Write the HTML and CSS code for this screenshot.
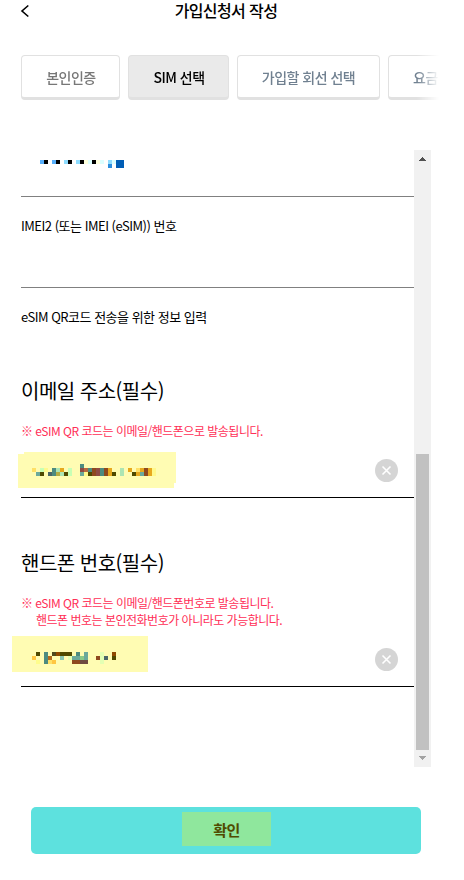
FILE: index.html
```html
<!DOCTYPE html>
<html lang="ko">
<head>
<meta charset="utf-8">
<title>가입신청서 작성</title>
<link rel="stylesheet" href="styles.css">
</head>
<body>
<header class="header">
  <svg class="back" width="10" height="14" viewBox="0 0 10 14"><path d="M8.300 1.500 2 7l6.300 5.500" fill="none" stroke="#000" stroke-width="1.600"/></svg>
  <h1 class="title">가입신청서 작성</h1>
</header>
<nav class="tabs">
  <div class="tab tab-done">본인인증</div>
  <div class="tab tab-active">SIM 선택</div>
  <div class="tab tab-line">가입할 회선 선택</div>
  <div class="tab tab-plan">요금</div>
</nav>
<main class="scroller">
  <div class="content">
    <div class="field field-first">
      <svg class="mosaic" width="88" height="8" viewBox="0 0 22 2" shape-rendering="crispEdges">
        <path fill="#58b0fc" d="M0 0h1v1h-1zM3 0h1v1h-1z"/>
        <path fill="#8edcff" d="M6 0h1v1h-1zM9 0h1v1h-1zM17 0h1v1h-1z"/>
        <path fill="#000" d="M1 0h1v1h-1zM4 0h1v1h-1zM7 0h1v1h-1zM10 0h1v1h-1zM13 0h1v1h-1z"/>
        <path fill="#ffffdc" d="M11 0h1v1h-1zM14 0h1v1h-1z"/>
        <path fill="#dcffff" d="M12 0h1v1h-1zM15 0h1v1h-1zM18 0h1v1h-1z"/>
        <path fill="#2b8edf" d="M17 1h1v1h-1z"/>
        <path fill="#005db5" d="M19 0h2v2h-2z"/>
      </svg>
    </div>
    <div class="field field-imei"><span class="label">IMEI2 (또는 IMEI (eSIM)) 번호</span></div>
    <p class="label info">eSIM QR코드 전송을 위한 정보 입력</p>
    <h2 class="heading">이메일 주소(필수)</h2>
    <p class="notice">※ eSIM QR 코드는 이메일/핸드폰으로 발송됩니다.</p>
    <div class="field field-email">
      <svg class="mark" width="158" height="36" viewBox="0 0 158 36" shape-rendering="crispEdges">
        <path fill="#fffcb3" d="M6 0h152v31h-2v5H0V2h6z"/>
        <g transform="translate(14 12) scale(4)">
          <path fill="#ffe066" d="M0 1h1v1h-1zM26 1h1v1h-1z"/>
          <path fill="#fff98c" d="M30 1h1v2h-1zM13 2h1v1h-1zM3 1h1v1h-1z"/>
          <path fill="#c8ffb5" d="M2 1h1v1h-1zM9 1h1v2h-1z"/>
          <path fill="#ade5b3" d="M6 1h1v1h-1zM7 2h1v1h-1zM22 1h1v2h-1z"/>
          <path fill="#4d8b80" d="M5 1h1v2h-1zM12 0h1v1h-1zM14 1h1v1h-1zM17 1h1v2h-1z"/>
          <path fill="#6ba99b" d="M1 2h1v1h-1zM12 2h1v1h-1zM27 2h1v1h-1z"/>
          <path fill="#4b6768" d="M4 2h1v1h-1z"/>
          <path fill="#b5ad42" d="M6 2h1v1h-1z"/>
          <path fill="#e7a91e" d="M7 1h1v1h-1zM19 1h1v2h-1zM24 1h1v1h-1zM27 1h1v1h-1zM26 2h1v1h-1zM29 1h1v2h-1z"/>
          <path fill="#8f4b43" d="M12 1h1v1h-1zM16 1h1v2h-1z"/>
          <path fill="#b56a42" d="M13 1h1v1h-1z"/>
          <path fill="#8f491e" d="M15 1h1v2h-1zM18 1h1v2h-1zM28 1h1v2h-1z"/>
          <path fill="#4f4900" d="M2 2h1v1h-1zM8 2h1v1h-1zM14 2h1v1h-1zM20 2h1v1h-1zM25 2h1v1h-1z"/>
        </g>
      </svg>
      <svg class="clear" width="24" height="24" viewBox="0 0 24 24"><circle cx="11.500" cy="12.500" r="11.500" fill="#d5d5d5"/><path d="m7.500 8.500 8 8m0-8-8 8" stroke="#fff" stroke-width="1.600"/></svg>
    </div>
    <h2 class="heading heading-phone">핸드폰 번호(필수)</h2>
    <p class="notice notice-phone">※ eSIM QR 코드는 이메일/핸드폰번호로 발송됩니다.<span class="notice-next">핸드폰 번호는 본인전화번호가 아니라도 가능합니다.</span></p>
    <div class="field field-phone">
      <svg class="mark mark-phone" width="136" height="36" viewBox="0 0 136 36" shape-rendering="crispEdges">
        <path fill="#fffcb3" d="M0 0h136v36H0z"/>
        <g transform="translate(20 16) scale(4)">
          <path fill="#4f4900" d="M1 0h1v1h-1zM7 0h3v1h-3zM20 1h1v1h-1z"/>
          <path fill="#50491e" d="M5 0h1v1h-1z"/>
          <path fill="#8f4900" d="M6 0h1v1h-1zM20 0h1v1h-1z"/>
          <path fill="#4d8b80" d="M3 0h1v3h-1zM11 0h1v1h-1z"/>
          <path fill="#6ba99b" d="M13 0h1v2h-1zM10 1h2v1h-2z"/>
          <path fill="#8bc887" d="M12 1h1v1h-1z"/>
          <path fill="#89c8b3" d="M7 1h1v1h-1z"/>
          <path fill="#e3ffb3" d="M9 1h1v1h-1zM17 0h1v3h-1z"/>
          <path fill="#ffc641" d="M0 1h1v1h-1zM5 2h1v1h-1z"/>
          <path fill="#ffe066" d="M4 2h1v1h-1z"/>
          <path fill="#fffd8c" d="M1 2h1v1h-1z"/>
          <path fill="#b5691e" d="M4 1h1v1h-1z"/>
          <path fill="#8f491e" d="M10 2h2v1h-2zM16 1h1v1h-1z"/>
          <path fill="#6f4b43" d="M12 2h2v1h-2z"/>
          <path fill="#4b6768" d="M18 1h1v1h-1z"/>
        </g>
      </svg>
      <svg class="clear" width="24" height="24" viewBox="0 0 24 24"><circle cx="11.500" cy="12.500" r="11.500" fill="#d5d5d5"/><path d="m7.500 8.500 8 8m0-8-8 8" stroke="#fff" stroke-width="1.600"/></svg>
    </div>
  </div>
  <div class="scrollbar">
    <svg width="17" height="17" viewBox="0 0 17 17" shape-rendering="crispEdges"><path fill="#505050" d="M8 7h1v1h1v1h1v1h1v1H5v-1h1V9h1V8h1z"/></svg>
    <div class="thumb"></div>
    <svg width="17" height="17" viewBox="0 0 17 17" shape-rendering="crispEdges"><path fill="#a3a3a3" d="M5 6h7v1h-1v1h-1v1H9v1H8V9H7V8H6V7H5z"/></svg>
  </div>
</main>
<button class="confirm"><span class="confirm-label">확인</span></button>
</body>
</html>
```
FILE: styles.css
```css
* { box-sizing: border-box; }
body {
  margin: 0;
  width: 464px;
  height: 880px;
  overflow: hidden;
  background: #fff;
  color: #000;
  font-family: "Noto Sans CJK KR", sans-serif;
  display: flex;
  flex-direction: column;
}
h1, h2, p { margin: 0; font-weight: 400; }
.header {
  height: 55px;
  width: 452px;
  padding-left: 20px;
  display: grid;
  grid-template-columns: 10px 1fr 30px;
  align-items: start;
}
.back { margin-top: 4px; }
.title {
  text-align: center;
  font-size: 16px;
  line-height: 20px;
  font-weight: 500;
  letter-spacing: -0.6px;
}
.tabs {
  width: 418px;
  height: 45px;
  margin-left: 21px;
  display: flex;
  gap: 8px;
  overflow: hidden;
  -webkit-mask-image: linear-gradient(to right, #000 396px, transparent 418px);
  mask-image: linear-gradient(to right, #000 396px, transparent 418px);
}
.tab {
  flex: none;
  height: 45px;
  border: 1px solid #e1e1e1;
  border-bottom-width: 3px;
  border-radius: 4px;
  text-align: center;
  font-size: 14px;
  line-height: 43px;
  letter-spacing: -0.5px;
  color: #777;
  font-weight: 500;
}
.tab-done { width: 99px; padding-left: 1px; }
.tab-active { width: 101px; padding-left: 1px; background: #eaeaea; color: #000; }
.tab-line { width: 143px; color: #708090; }
.tab-plan { width: 100px; padding-left: 24px; text-align: left; color: #708090; }
.scroller {
  width: 431px;
  height: 617px;
  margin-top: 50px;
  padding-left: 21px;
  display: flex;
}
.content { width: 393px; display: flex; flex-direction: column; }
.field { flex: none; border-bottom: 1px solid #808080; display: flex; }
.field-first { height: 47px; padding: 10px 0 0 19px; }
.field-imei { height: 91px; padding-top: 19px; }
.label { font-size: 13px; line-height: 20px; letter-spacing: -0.5px; white-space: nowrap; }
.info { margin-top: 19px; }
.heading { margin-top: 49px; font-size: 20px; line-height: 30px; letter-spacing: -0.5px; }
.notice { margin-top: 16px; font-size: 12px; line-height: 18px; letter-spacing: -0.5px; color: #ff2e56; }
.field-email, .field-phone { border-color: #000; justify-content: space-between; }
.field-email { height: 58px; padding: 12px 15px 0 0; }
.mark { flex: none; margin-left: -3px; }
.field-email .clear { margin-top: 6px; }
.heading-phone { margin-top: 50px; }
.notice-phone { line-height: 17px; }
.notice-next { display: block; padding-left: 15px; }
.field-phone { height: 59px; padding: 8px 15px 0 0; }
.mark-phone { margin-left: -9px; }
.field-phone .clear { margin-top: 11px; }
.scrollbar {
  width: 17px;
  flex: none;
  background: #f1f1f1;
  display: flex;
  flex-direction: column;
}
.scrollbar svg { display: block; flex: none; }
.thumb { width: 13px; height: 296px; margin: auto 2px 0; background: #c1c1c1; }
.confirm {
  width: 390px;
  height: 47px;
  margin: 40px 0 0 31px;
  padding: 5px 0 0 151px;
  border: 0;
  border-radius: 5px;
  background: #5de1de;
  display: flex;
  align-items: flex-start;
  font-family: inherit;
}
.confirm-label {
  width: 89px;
  height: 34px;
  background: #8fe79d;
  color: #504b00;
  text-align: center;
  font-size: 15px;
  line-height: 35px;
  font-weight: 700;
  letter-spacing: -0.5px;
}
```
